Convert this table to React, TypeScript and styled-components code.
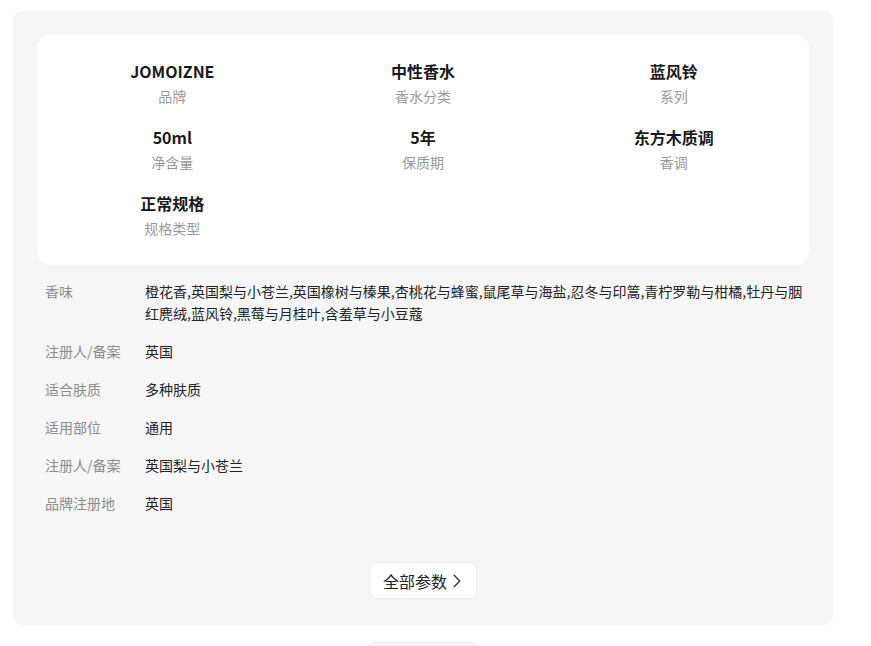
import React from 'react';
import styled, { createGlobalStyle } from 'styled-components';

interface Spec {
  value: string;
  label: string;
}

interface Param {
  label: string;
  value: string;
}

const specs: Spec[] = [
  { value: 'JOMOIZNE', label: '品牌' },
  { value: '中性香水', label: '香水分类' },
  { value: '蓝风铃', label: '系列' },
  { value: '50ml', label: '净含量' },
  { value: '5年', label: '保质期' },
  { value: '东方木质调', label: '香调' },
  { value: '正常规格', label: '规格类型' },
];

const params: Param[] = [
  {
    label: '香味',
    value:
      '橙花香,英国梨与小苍兰,英国橡树与榛果,杏桃花与蜂蜜,鼠尾草与海盐,忍冬与印篙,青柠罗勒与柑橘,牡丹与胭红麂绒,蓝风铃,黑莓与月桂叶,含羞草与小豆蔻',
  },
  { label: '注册人/备案', value: '英国' },
  { label: '适合肤质', value: '多种肤质' },
  { label: '适用部位', value: '通用' },
  { label: '注册人/备案', value: '英国梨与小苍兰' },
  { label: '品牌注册地', value: '英国' },
];

const GlobalStyle = createGlobalStyle`
  body {
    margin: 0;
    background: #fff;
    font-family: "Noto Sans CJK SC", "Noto Sans", sans-serif;
    overflow: hidden;
  }
`;

const Chevron: React.FC = () => (
  <svg width="8" height="14" viewBox="0 0 8 14" fill="none">
    <path d="M1.2 1.2 L6.8 7 L1.2 12.8" stroke="#333" strokeWidth="1.3" strokeLinecap="round" strokeLinejoin="round" />
  </svg>
);

const App: React.FC = () => {
  return (
    <>
      <GlobalStyle />
      <Page>
        <Panel>
          <SpecCard>
            {specs.map((s) => (
              <SpecItem key={s.label}>
                <SpecValue>{s.value}</SpecValue>
                <SpecLabel>{s.label}</SpecLabel>
              </SpecItem>
            ))}
          </SpecCard>
          <ParamList>
            {params.map((p, i) => (
              <ParamRow key={i}>
                <ParamLabel>{p.label}</ParamLabel>
                <ParamValue>{p.value}</ParamValue>
              </ParamRow>
            ))}
          </ParamList>
          <MoreButton>
            全部参数
            <Chevron />
          </MoreButton>
        </Panel>
        <NextPill />
      </Page>
    </>
  );
};

const Page = styled.div`
  width: 820px;
  padding: 11px 0 0 13px;
  display: flex;
  flex-direction: column;
  align-items: center;
`;

const Panel = styled.section`
  width: 100%;
  box-sizing: border-box;
  background: #f6f6f6;
  border-radius: 9px;
  padding: 24px 24px 26px;
  display: flex;
  flex-direction: column;
  align-items: center;
`;

const SpecCard = styled.div`
  width: 100%;
  box-sizing: border-box;
  background: #fff;
  border-radius: 14px;
  padding: 25px 10px 27px;
  display: grid;
  grid-template-columns: repeat(3, 1fr);
  row-gap: 20px;
`;

const SpecItem = styled.div`
  display: flex;
  flex-direction: column;
  align-items: center;
`;

const SpecValue = styled.div`
  font-size: 16px;
  line-height: 22px;
  font-weight: 700;
  color: #1a1a1a;
`;

const SpecLabel = styled.div`
  margin-top: 5px;
  font-size: 14px;
  line-height: 19px;
  color: #999;
`;

const ParamList = styled.div`
  width: 100%;
  box-sizing: border-box;
  padding: 15px 0 0 8px;
  display: flex;
  flex-direction: column;
  gap: 16px;
`;

const ParamRow = styled.div`
  display: flex;
  font-size: 14px;
  line-height: 22px;
`;

const ParamLabel = styled.div`
  flex: 0 0 100px;
  color: #8c8c8c;
`;

const ParamValue = styled.div`
  flex: 1;
  color: #222;
`;

const MoreButton = styled.button`
  margin-top: 48px;
  height: 37px;
  padding: 0 15px 0 13px;
  display: flex;
  align-items: center;
  gap: 6px;
  background: #fff;
  border: 1px solid #ececec;
  border-radius: 7px;
  font-family: inherit;
  font-size: 16px;
  color: #222;
  cursor: pointer;
`;

const NextPill = styled.div`
  margin-top: 16px;
  width: 116px;
  height: 30px;
  border-radius: 10px;
  background: #f6f6f6;
`;

export default App;
